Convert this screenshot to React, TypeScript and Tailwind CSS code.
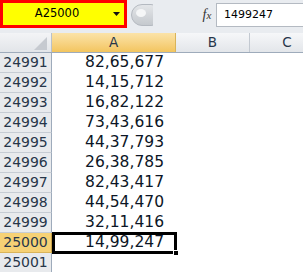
const rows = [
  { n: 24991, v: '82,65,677' },
  { n: 24992, v: '14,15,712' },
  { n: 24993, v: '16,82,122' },
  { n: 24994, v: '73,43,616' },
  { n: 24995, v: '44,37,793' },
  { n: 24996, v: '26,38,785' },
  { n: 24997, v: '82,43,417' },
  { n: 24998, v: '44,54,470' },
  { n: 24999, v: '32,11,416' },
  { n: 25000, v: '14,99,247' },
  { n: 25001, v: '' },
];

export default function App() {
  return (
    <div className="w-[303px] h-[272px] overflow-hidden bg-white font-['DejaVu_Sans',sans-serif]">
      {/* Name box + formula bar */}
      <div className="h-[33px] flex bg-[#e9ecf0]">
        <div className="w-[127px] h-[28px] border-[3px] border-[#ff0000] bg-[#ffff00] flex items-center shrink-0">
          <span className="w-[104px] text-center text-[11.5px] text-black pl-[4px]">A25000</span>
          <svg width="8" height="5" viewBox="0 0 8 5" className="ml-[6px]">
            <path d="M0 0 H7 L3.5 4 Z" fill="#111" />
          </svg>
        </div>
        <div className="w-[71px] shrink-0 pt-[4px] pl-[4px]">
          <svg width="22" height="22" viewBox="0 0 22 22">
            <defs>
              <linearGradient id="knob" x1="0" y1="0" x2="0" y2="1">
                <stop offset="0" stopColor="#e4e6e9" />
                <stop offset="1" stopColor="#c4c8cd" />
              </linearGradient>
            </defs>
            <rect x="0.5" y="0.5" width="30" height="21" rx="10.5" fill="url(#knob)" stroke="#b4b9c0" />
            <ellipse cx="10" cy="9" rx="5" ry="4" fill="#f5f6f7" />
          </svg>
        </div>
        <div className="w-[18px] shrink-0 flex items-center justify-center pb-[4px] text-[14px] italic font-['Liberation_Serif',serif] text-[#333]">
          <span>f<span className="text-[11px]">x</span></span>
        </div>
        <div className="flex-1 h-[24px] mt-[3px] ml-[0px] bg-white border border-r-0 border-[#b4bac2] flex items-center pl-[7px] text-[11px] text-black">
          1499247
        </div>
      </div>

      {/* Column headers */}
      <div className="h-[20px] flex text-[13.5px] text-[#27364a] border-b border-[#9eabbb]">
        <div className="w-[52px] shrink-0 relative bg-gradient-to-b from-[#f3f4f6] to-[#e2e5e9] border-r border-[#b9c1cc]">
          <svg width="13" height="13" viewBox="0 0 13 13" className="absolute right-[4px] bottom-[2px]">
            <path d="M13 0 V13 H0 Z" fill="#c6cad0" />
          </svg>
        </div>
        <div className="w-[124px] shrink-0 flex items-center justify-center bg-gradient-to-b from-[#fbe3a8] to-[#f3c55e] border-r border-[#d9b45a]">
          A
        </div>
        <div className="w-[74px] shrink-0 flex items-center justify-center bg-gradient-to-b from-[#f6f7f9] to-[#e3e6ea] border-r border-[#c3c9d1]">
          B
        </div>
        <div className="w-[74px] shrink-0 flex items-center justify-center bg-gradient-to-b from-[#f6f7f9] to-[#e3e6ea]">
          C
        </div>
      </div>

      {/* Rows */}
      {rows.map((r) => {
        const sel = r.n === 25000;
        return (
          <div key={r.n} className="h-[20px] flex">
            <div
              className={`w-[52px] shrink-0 flex items-center justify-center text-[14px] text-[#27364a] border-r border-b ${
                sel ? 'bg-[#f6d175] border-r-[#c9a24a] border-b-[#d9b45a]' : 'bg-[#e8eaed] border-r-[#9eabbb] border-b-[#c6ccd4]'
              }`}
            >
              {r.n}
            </div>
            <div className="w-[124px] shrink-0 relative flex items-center justify-end pr-[12px] text-[15.5px] text-[#0c1626]">
              {r.v}
              {sel && (
                <>
                  <div className="absolute left-0 top-[-1px] w-[125px] h-[22px] border-[3px] border-black" />
                  <div className="absolute left-[121px] top-[17px] w-[6px] h-[6px] bg-black border border-white" />
                </>
              )}
            </div>
            <div className="flex-1" />
          </div>
        );
      })}
    </div>
  );
}
